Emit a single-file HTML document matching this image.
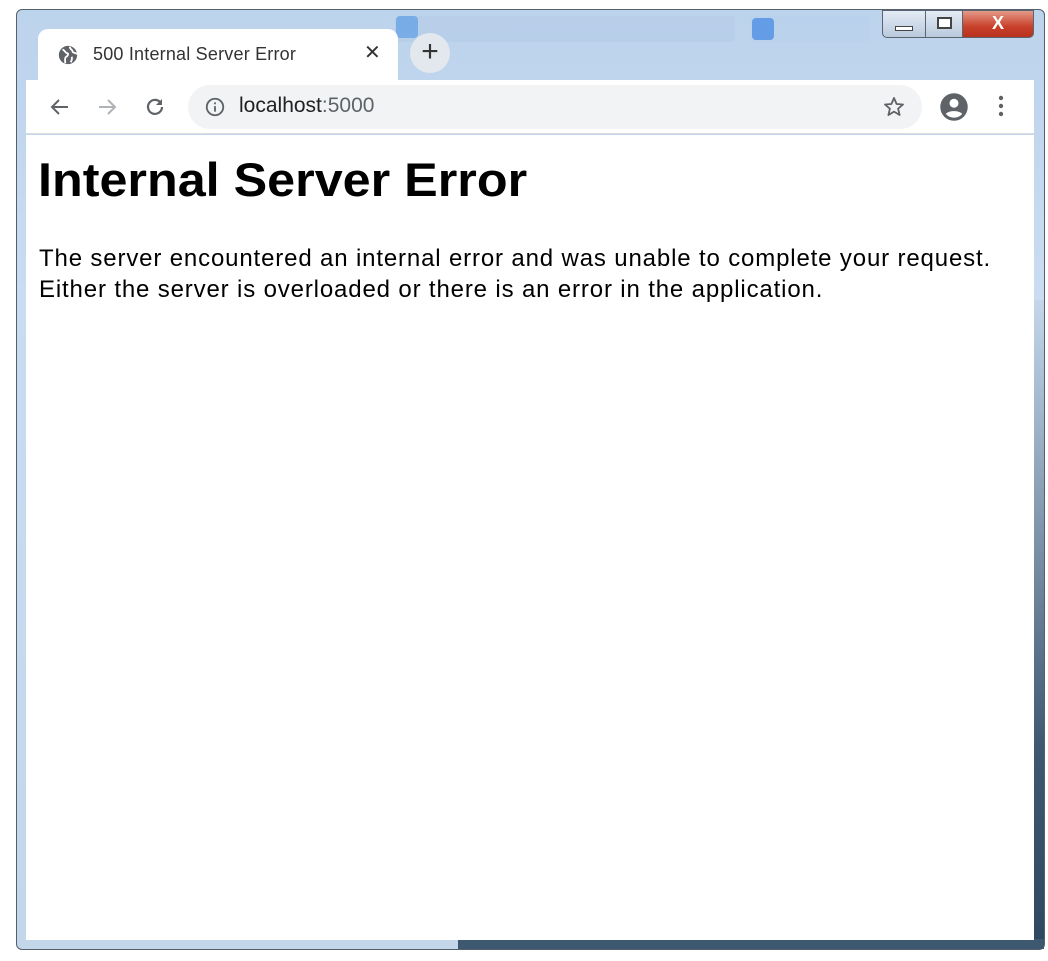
<!DOCTYPE html>
<html><head><meta charset="utf-8"><style>
*{margin:0;padding:0;box-sizing:border-box}
body{width:1048px;height:961px;background:#fff;position:relative;overflow:hidden;font-family:"Liberation Sans",sans-serif}
.frame{position:absolute;left:16px;top:9px;width:1029px;height:941px;border:1px solid #55606c;border-radius:6px;background:linear-gradient(180deg,#bcd3ec 0%,#c9dcf1 30%,#c3d6ea 100%)}
.rframe{position:absolute;left:1034px;top:300px;width:10px;height:640px;background:linear-gradient(180deg,#c3d6ea,#3f5870 70%,#2f4a60)}
.bframe{position:absolute;left:458px;top:939px;width:586px;height:10px;background:#3e5870}
.blurtab{position:absolute;top:16px;height:26px;background:#aac6e6;border-radius:4px;opacity:.6}
.tab{position:absolute;left:38px;top:29px;width:360px;height:52px;background:#fff;border-radius:10px 10px 0 0}
.tab .t{position:absolute;left:55px;top:15px;font-size:18px;color:#333;letter-spacing:0.2px}
.tab .x{position:absolute;left:326px;top:11px;font-size:20px;color:#333}
.plus{position:absolute;left:410px;top:33px;width:40px;height:40px;border-radius:50%;background:#e3e8ee;text-align:center;line-height:38px;font-size:30px;color:#333}
.toolbar{position:absolute;left:26px;top:80px;width:1008px;height:54px;background:#fff;border-bottom:1px solid #dadce0}
.omni{position:absolute;left:188px;top:85px;width:734px;height:44px;border-radius:22px;background:#f1f3f4}
.url{position:absolute;left:239px;top:94px;font-size:21px;color:#202124}
.url span{color:#5f6368}
.content{position:absolute;left:26px;top:135px;width:1008px;height:805px;background:#fff}
h1{position:absolute;left:38px;top:152px;font-size:47px;font-weight:bold;color:#000;transform-origin:0 0;transform:scaleX(1.07);white-space:nowrap;letter-spacing:0px}
p{position:absolute;left:39px;top:243px;font-size:24px;line-height:31px;color:#000;white-space:nowrap;letter-spacing:0.85px}
.wb{position:absolute;top:10px;height:28px;border:1px solid #5a6470}
</style></head><body>
<div class="frame"></div>
<div class="rframe"></div>
<div class="bframe"></div>
<div class="blurtab" style="left:395px;width:340px;background:#b4cce8"></div>
<div class="blurtab" style="left:750px;width:120px;background:#b8d0ec"></div>
<div class="blurtab" style="left:396px;top:16px;width:22px;height:22px;background:#5c9ee6;opacity:.7"></div>
<div class="blurtab" style="left:752px;top:18px;width:22px;height:22px;background:#4f8fe3;opacity:.8"></div>
<div class="wb" style="left:882px;width:44px;border-radius:0 0 0 5px;background:linear-gradient(#e4ecf5,#b9c9dc)"><div style="position:absolute;left:12px;top:15px;width:18px;height:5px;border:1px solid #444;background:#fff"></div></div>
<div class="wb" style="left:925px;width:38px;background:linear-gradient(#e4ecf5,#b9c9dc)"><div style="position:absolute;left:11px;top:6px;width:15px;height:12px;border:2px solid #444;background:#fff"></div></div>
<div class="wb" style="left:962px;width:72px;border-radius:0 0 5px 0;background:linear-gradient(#e49a88,#c8402a 60%,#b83220);color:#fff;text-align:center;font-weight:bold;font-size:18px;line-height:24px">X</div>
<div class="tab">
<svg style="position:absolute;left:19px;top:15px" width="22" height="22" viewBox="0 0 24 24"><circle cx="12" cy="12" r="10" fill="#5f6368"/><path d="M6 6c3 1 3 4 5 4s1 3-1 4-1 5-1 7M14 3c0 3 3 3 3 5s3 1 5 3M16 14c1 2 0 4-1 6" stroke="#fff" stroke-width="2" fill="none"/></svg>
<div class="t">500 Internal Server Error</div><div class="x">✕</div></div>
<div class="plus">+</div>
<div class="toolbar"></div>
<div class="omni"></div>
<svg style="position:absolute;left:48px;top:95px" width="24" height="24" viewBox="0 0 24 24"><path d="M20 12H5M11 5l-7 7 7 7" stroke="#5f6368" stroke-width="2" fill="none"/></svg>
<svg style="position:absolute;left:95px;top:95px" width="24" height="24" viewBox="0 0 24 24"><path d="M4 12h15M13 5l7 7-7 7" stroke="#b0b3b7" stroke-width="2" fill="none"/></svg>
<svg style="position:absolute;left:143px;top:95px" width="24" height="24" viewBox="0 0 24 24"><path d="M19 12a7 7 0 1 1-2-5" stroke="#5f6368" stroke-width="2.2" fill="none"/><path d="M19 4v6h-6z" fill="#5f6368"/></svg>
<svg style="position:absolute;left:204px;top:96px" width="22" height="22" viewBox="0 0 24 24"><circle cx="12" cy="12" r="9" stroke="#5f6368" stroke-width="2" fill="none"/><path d="M12 11v6M12 7v2" stroke="#5f6368" stroke-width="2"/></svg>
<div class="url">localhost<span>:5000</span></div>
<svg style="position:absolute;left:882px;top:95px" width="24" height="24" viewBox="0 0 24 24"><path d="M12 3l2.6 6 6.4.5-4.9 4.2 1.5 6.3L12 16.6 6.4 20l1.5-6.3L3 9.5 9.4 9z" stroke="#5f6368" stroke-width="1.8" fill="none" stroke-linejoin="round"/></svg>
<svg style="position:absolute;left:939px;top:92px" width="30" height="30" viewBox="0 0 24 24"><circle cx="12" cy="12" r="11" fill="#5f6368"/><circle cx="12" cy="9" r="3.6" fill="#fff"/><path d="M5.5 17.5c2-3 11-3 13 0c-1.5 2-4 3-6.5 3s-5-1-6.5-3z" fill="#fff"/></svg>
<svg style="position:absolute;left:993px;top:94px" width="16" height="26" viewBox="0 0 16 26"><circle cx="8" cy="4" r="2.2" fill="#5f6368"/><circle cx="8" cy="12" r="2.2" fill="#5f6368"/><circle cx="8" cy="20" r="2.2" fill="#5f6368"/></svg>
<div class="content"></div>
<h1>Internal Server Error</h1>
<p>The server encountered an internal error and was unable to complete your request.<br>Either the server is overloaded or there is an error in the application.</p>
</body></html>
